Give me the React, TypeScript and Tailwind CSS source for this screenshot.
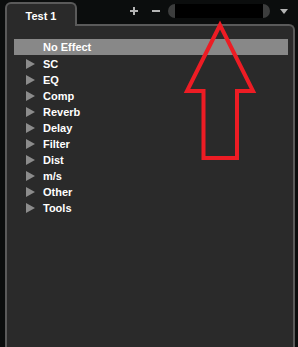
import React from "react";

const items = ["SC", "EQ", "Comp", "Reverb", "Delay", "Filter", "Dist", "m/s", "Other", "Tools"];

function Caret() {
    return (
        <svg width="10" height="10" viewBox="0 0 10 10" className="shrink-0">
            <polygon points="0,0 9,5 0,10" fill="#8c8c8c" />
        </svg>
    );
}

export default function App() {
    return (
        <div
            className="relative w-[298px] h-[347px] overflow-hidden bg-[#0b0d0d] text-white"
            style={{ fontFamily: '"Liberation Sans", Arial, sans-serif' }}
        >
            {/* Header: tab + controls */}
            <div className="flex h-[24px]">
                <div className="relative z-10 mt-[2px] ml-[5px] w-[72px] h-[24px] shrink-0 rounded-t-[6px] border-2 border-b-0 border-[#5a5a5a] bg-[#2a2a2a] pt-[4px] text-center text-[11px] font-bold leading-[16px]">
                    Test 1
                </div>
                <div className="flex items-start pt-[4px]">
                    <div className="ml-[53px] flex h-[14px] w-[8px] items-center justify-center">
                        <svg width="8" height="8" viewBox="0 0 8 8">
                            <rect x="3" y="0" width="2" height="8" fill="#b4b4b4" />
                            <rect x="0" y="3" width="8" height="2" fill="#b4b4b4" />
                        </svg>
                    </div>
                    <div className="ml-[14px] flex h-[14px] w-[8px] items-center justify-center">
                        <svg width="8" height="2" viewBox="0 0 8 2">
                            <rect x="0" y="0" width="8" height="2" fill="#b4b4b4" />
                        </svg>
                    </div>
                    <div className="ml-[8px] flex h-[14px] w-[102px] items-center rounded-full bg-[#3c3d3d] px-[7px]">
                        <div className="h-full w-full bg-black" />
                    </div>
                    <div className="ml-[10px] flex h-[14px] w-[8px] items-center justify-center">
                        <svg width="8" height="5" viewBox="0 0 8 5">
                            <polygon points="0,0 8,0 4,5" fill="#b4b4b4" />
                        </svg>
                    </div>
                </div>
            </div>

            {/* Panel */}
            <div className="ml-[5px] mr-[3px] h-[323px] rounded-tr-[6px] border-2 border-b-0 border-[#5a5a5a] bg-[#2a2a2a] pt-[13px]">
                <div className="ml-[7px] mr-[5px] h-[16px] bg-[#888888] pl-[29px] text-[11px] font-bold leading-[16px]">
                    No Effect
                </div>
                <div className="mt-[1px] flex flex-col">
                    {items.map((name) => (
                        <div key={name} className="flex h-[16px] items-center pl-[19px] text-[11px] font-bold leading-[16px]">
                            <Caret />
                            <span className="ml-[7px]">{name}</span>
                        </div>
                    ))}
                </div>
            </div>

            {/* Red annotation arrow */}
            <svg className="pointer-events-none absolute inset-0 z-20" width="298" height="347" viewBox="0 0 298 347">
                <polygon
                    points="220,25 187,91 203.5,91 203.5,158 237,158 237,91 253,91"
                    fill="none"
                    stroke="#ed1c24"
                    strokeWidth="4"
                    strokeLinejoin="miter"
                />
            </svg>
        </div>
    );
}
